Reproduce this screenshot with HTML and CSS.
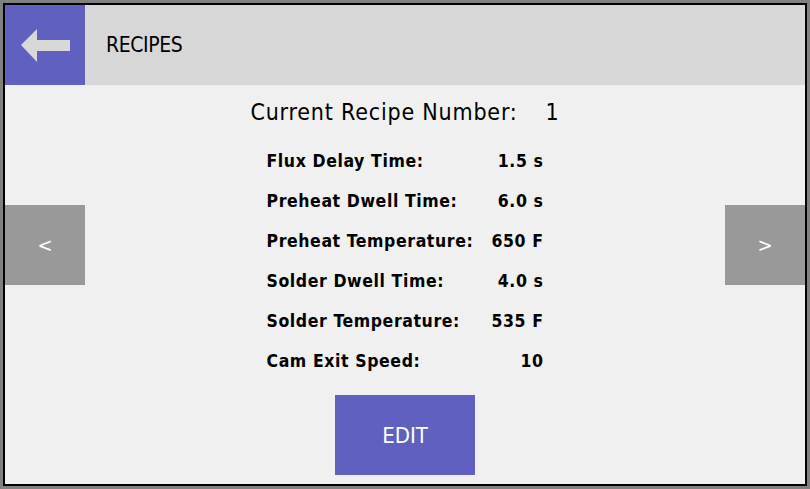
FILE: index.html
```html
<!DOCTYPE html>
<html>
<head>
<meta charset="utf-8">
<link rel="stylesheet" href="styles.css">
</head>
<body>
<div class="screen">
  <header class="topbar">
    <button class="back" aria-label="Back">
      <svg width="80" height="80" viewBox="0 0 80 80"><polygon points="16,40 32,24 32,35 65,35 65,46 32,46 32,57" fill="#d8d8d8"/></svg>
    </button>
    <div class="title">RECIPES</div>
  </header>
  <main class="main">
    <div class="side"><button class="nav">&lt;</button></div>
    <div class="center">
      <div class="current"><span>Current Recipe Number:</span><span class="num">1</span></div>
      <div class="rows">
        <div class="row"><span>Flux Delay Time:</span><span>1.5 s</span></div>
        <div class="row"><span>Preheat Dwell Time:</span><span>6.0 s</span></div>
        <div class="row"><span>Preheat Temperature:</span><span>650 F</span></div>
        <div class="row"><span>Solder Dwell Time:</span><span>4.0 s</span></div>
        <div class="row"><span>Solder Temperature:</span><span>535 F</span></div>
        <div class="row"><span>Cam Exit Speed:</span><span>10</span></div>
      </div>
      <button class="edit">EDIT</button>
    </div>
    <div class="side"><button class="nav">&gt;</button></div>
  </main>
</div>
</body>
</html>
```
FILE: styles.css
```css
html, body { margin: 0; padding: 0; }
body { background: #808080; font-family: "DejaVu Sans Condensed", "DejaVu Sans", sans-serif; font-stretch: condensed; }
.screen {
  margin: 3px;
  width: 800px;
  height: 479px;
  border: 2px solid #000;
  background: #f0f0f0;
  display: flex;
  flex-direction: column;
}
button { border: 0; padding: 0; margin: 0; font-family: inherit; font-stretch: inherit; cursor: pointer; }
.topbar { height: 80px; background: #d7d7d7; display: flex; align-items: center; }
.back { width: 80px; height: 80px; background: #6060c0; display: block; }
.back svg { display: block; }
.title { margin-left: 21px; font-size: 21px; letter-spacing: -0.4px; color: #000; }
.main { flex: 1; display: flex; }
.side { width: 80px; padding-top: 120px; }
.nav { width: 80px; height: 80px; background: #999999; color: #fff; font-size: 20px; display: block; }
.center { flex: 1; display: flex; flex-direction: column; align-items: center; padding-top: 12px; }
.current { font-size: 23px; line-height: 30px; letter-spacing: 0.8px; display: flex; gap: 28px; }
.rows { margin-top: 14px; width: 277px; }
.row { display: flex; justify-content: space-between; height: 40px; line-height: 40px; font-size: 17.5px; font-weight: bold; letter-spacing: 0.6px; }
.edit { margin-top: 14px; width: 140px; height: 80px; background: #6060c0; color: #fff; font-size: 22px; }
```
